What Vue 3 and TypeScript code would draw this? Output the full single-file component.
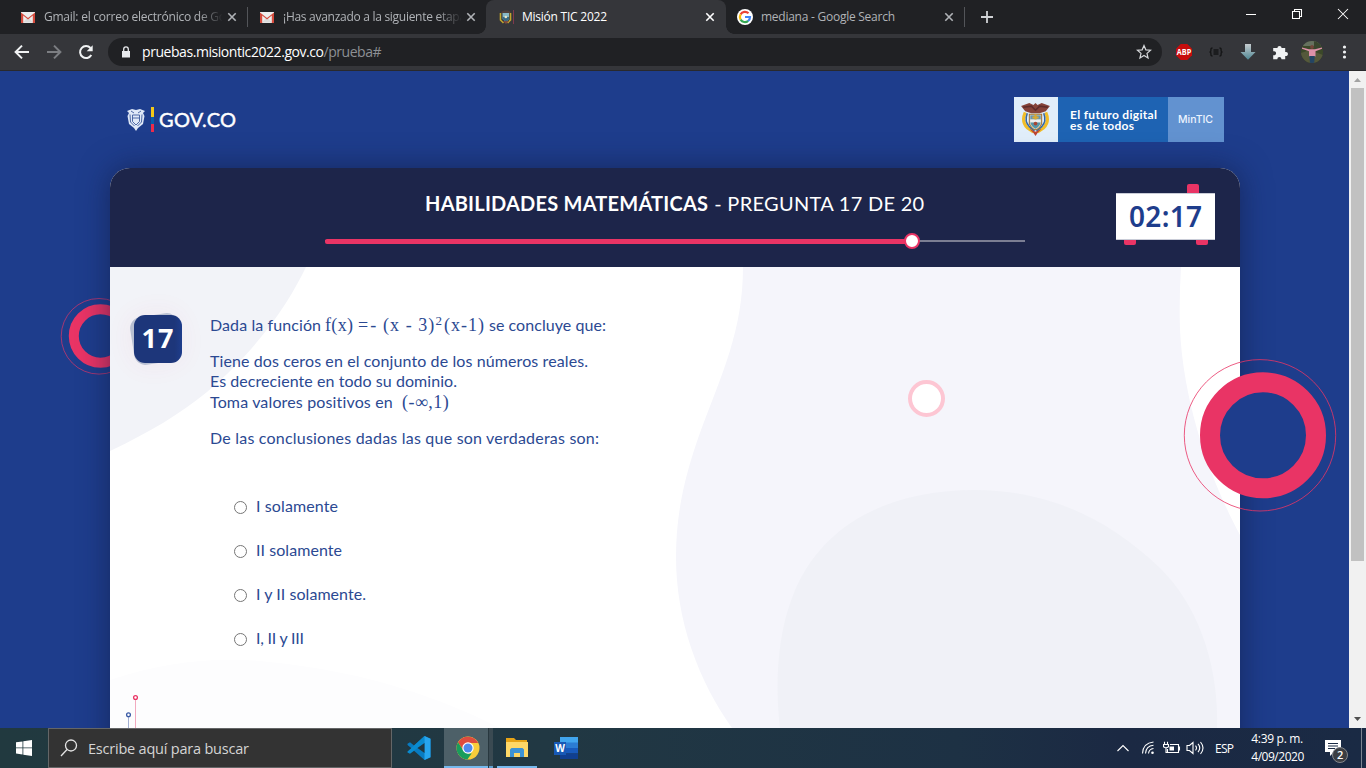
<script setup lang="ts">
import type { Directive } from 'vue'

interface Tab {
  title: string
  icon: 'gmail' | 'crest' | 'google'
  kind: string
  active?: boolean
  width: number
}

const tabs: Tab[] = [
  { title: 'Gmail: el correo electrónico de Go', icon: 'gmail', kind: 'first', width: 182 },
  { title: '¡Has avanzado a la siguiente etapa', icon: 'gmail', kind: 'second', width: 183 },
  { title: 'Misión TIC 2022', icon: 'crest', kind: 'current', active: true, width: 85 },
  { title: 'mediana - Google Search', icon: 'google', kind: 'last', width: 134 },
]

const options = [
  { label: 'I solamente', width: 82 },
  { label: 'II solamente', width: 86 },
  { label: 'I y II solamente.', width: 110 },
  { label: 'I, II y III', width: 48 },
]

const question = 17
const total = 20

// Tracks a line of text so that it takes up the given width in pixels.
const vFit: Directive<HTMLElement, number> = {
  mounted(el, { value }) {
    if (!value) return
    const natural = el.getBoundingClientRect().width
    const count = (el.textContent ?? '').trim().length
    el.style.letterSpacing = `${(value - natural) / Math.max(1, count - 1)}px`
  },
}
</script>

<template>
  <div class="screen">
    <header class="tabstrip">
      <div v-for="tab in tabs" :key="tab.kind" class="tab" :class="[tab.kind, { active: tab.active }]">
        <svg v-if="tab.icon === 'gmail'" class="fav" viewBox="0 0 16 16">
          <path d="M1 3h14v11H1z" fill="#eee" />
          <path d="M3 13.5 8 8l5 5.5z" fill="#dcdcdc" />
          <path d="M1 14V3.400L8 9l7-5.600V14h-2.200V6.500L8 10.500 3.200 6.500V14z" fill="#d54b3d" />
        </svg>
        <svg v-else-if="tab.icon === 'crest'" class="fav" viewBox="0 0 16 16">
          <path d="M3 3 6 1.500h4L13 3l-2 2H5z" fill="#51403b" />
          <path d="M2.500 4v7l3 3M12.500 4v7l-3 3" fill="none" stroke="#c2a62d" stroke-width="1.600" />
          <path d="M4.500 4h6.500v6l-3 3-3.500-3z" fill="#87b8c6" />
          <path d="M4.500 8h6.500v2l-3 3-3.500-3z" fill="#396a83" />
          <circle cx="7.800" cy="8" r="1.300" fill="#eee6c4" />
          <path d="M5 12h6l-3 3z" fill="#7e4a3e" />
          <path d="M15.500 1v14" stroke="#80394d" />
        </svg>
        <svg v-else class="fav" viewBox="0 0 16 16">
          <circle cx="8" cy="8" r="8" fill="#fff" />
          <path d="M3.600 5.400A5 5 0 0 1 11.500 4.300" fill="none" stroke="#ea4335" stroke-width="2.200" />
          <path d="M3.600 5.400A5.200 5.200 0 0 0 3.600 10.600" fill="none" stroke="#fbbc05" stroke-width="2.200" />
          <path d="M3.600 10.600A5 5 0 0 0 11.200 11.800" fill="none" stroke="#34a853" stroke-width="2.200" />
          <path d="M8 8h5c0 1.700-.7 3-1.900 4" fill="none" stroke="#4285f4" stroke-width="2.200" />
        </svg>
        <div class="tab-title"><span v-fit="tab.width">{{ tab.title }}</span></div>
        <svg class="tab-close" viewBox="0 0 10 10"><path d="m1.300 1.300 7.400 7.400m0-7.400L1.300 8.700" /></svg>
      </div>
      <svg class="plus" viewBox="0 0 12 12"><path d="M6 0v12M0 6h12" /></svg>
      <div class="window-buttons">
        <svg viewBox="0 0 12 12"><path d="M1 6.500h10" /></svg>
        <svg viewBox="0 0 12 12"><path d="M1.500 3.500h7v7h-7zM3.500 3.500v-2h7v7h-2" /></svg>
        <svg viewBox="0 0 12 12"><path d="m1 1 10 10m0-10L1 11" /></svg>
      </div>
    </header>

    <nav class="toolbar">
      <svg class="nav-icon" viewBox="0 0 16 16"><path d="M15 8H2M8 1.600 1.600 8 8 14.400" /></svg>
      <svg class="nav-icon dim" viewBox="0 0 16 16"><path d="M1 8h13M8 1.600 14.400 8 8 14.400" /></svg>
      <svg class="nav-icon" viewBox="0 0 16 16">
        <path d="M13.300 11A6 6 0 1 1 12.500 4" /><path class="solid" d="M14.700 1.200v6H8.700z" />
      </svg>
      <div class="omnibox">
        <svg class="lock" viewBox="0 0 10 12">
          <path d="M1 5h8v6.500H1z" fill="#e8eaed" /><path d="M2.700 5V3.200a2.300 2.300 0 0 1 4.600 0V5" fill="none" stroke="#e8eaed" stroke-width="1.300" />
        </svg>
        <span class="url" v-fit="182">pruebas.misiontic2022.gov.co</span><span class="url path" v-fit="58">/prueba#</span>
        <svg class="star" viewBox="0 0 16 16"><path d="m8 1.500 1.850 4.350 4.700.4-3.550 3.100 1.050 4.600L8 11.500l-4.050 2.450L5 9.350l-3.550-3.100 4.700-.4z" /></svg>
      </div>
      <div class="extensions">
        <svg viewBox="0 0 16 16">
          <path d="M4.700 0h6.600L16 4.700v6.600L11.300 16H4.700L0 11.300V4.700z" fill="#c70d0d" />
          <text x=".8" y="11" textLength="14.400" lengthAdjust="spacingAndGlyphs" class="abp">ABP</text>
        </svg>
        <svg viewBox="0 0 16 16" fill="none" stroke="#151617" stroke-width="1.400">
          <path d="M4.500 4Q2.700 4 2.900 6 3 8 1.500 8 3 8 2.900 10 2.700 12 4.500 12M11.500 4Q13.300 4 13.100 6 13 8 14.500 8 13 8 13.100 10 13.300 12 11.500 12M5.500 6h5M5.500 8h5M5.500 10h5" />
        </svg>
        <svg viewBox="0 0 16 16"><defs><linearGradient id="dl" y2="1" x2="0"><stop stop-color="#c5cbce" /><stop offset="1" stop-color="#4e8794" /></linearGradient></defs><path d="M5 0h6v8h4.500L8 15.800.5 8H5z" fill="url(#dl)" /></svg>
        <svg viewBox="0 0 16 16"><path d="M1.200 4h4.200a2.100 2.100 0 1 1 4.200 0h3.600v4a2.100 2.100 0 1 1 0 4v3.200H9.500a2.100 2.100 0 1 0-4.200 0H1.200v-4a2.100 2.100 0 1 0 0-3.900z" fill="#f1f3f4" /></svg>
        <svg class="avatar" viewBox="0 0 22 22">
          <defs><clipPath id="face"><circle cx="11" cy="11" r="11" /></clipPath></defs>
          <g clip-path="url(#face)">
            <path d="M0 0h22v22H0z" fill="#3b4829" /><path d="M0 0h22v5H0z" fill="#66715f" />
            <path d="M0 12 9 9l13 5v8H0z" fill="#55583a" /><path d="M13 0h9v8h-9z" fill="#39462e" />
            <path d="M1 6.500 8 8.200h6l7-1.700v1.200l-6.500 2.600v5.200H8v-5.200L1 7.700z" fill="#dd91a9" /><path d="M8.300 15h5.500l-.6 7H9z" fill="#244564" />
            <circle cx="11" cy="6" r="1.900" fill="#73463a" />
          </g>
        </svg>
        <svg viewBox="0 0 16 16" fill="#f1f3f4"><circle cx="8.500" cy="3" r="1.600" /><circle cx="8.500" cy="8" r="1.600" /><circle cx="8.500" cy="13" r="1.600" /></svg>
      </div>
    </nav>

    <div class="viewport">
      <main class="page">
        <svg class="ring-left" viewBox="0 0 80 80">
          <circle cx="39" cy="39.300" r="37.800" stroke-width="1" opacity=".65" /><circle cx="40.500" cy="39" r="26.700" stroke-width="10" />
        </svg>
        <div class="brands">
          <div class="gov">
            <svg class="gov-crest" viewBox="0 0 20 23">
              <path d="M1 3 6 1l4 1 4-1 5 2-2 2 1.500 3-1.500 8-5 4-2 3-2-3-5-4L1.500 8 3 5z" fill="#dfe8f7" />
              <path d="M6.500 7h7v6.500L10 17l-3.500-3.500zM6.500 10h7M4 6.500l.5 7.500 4 4M16 6.500l-.5 7.500-4 4M5 3l3 2M15 3l-3 2" fill="none" stroke="#3d5a9c" stroke-width=".9" />
            </svg>
            <i class="flag"></i>
            <span class="gov-text" v-fit="77">GOV.CO</span>
          </div>
          <div class="ministry">
            <div class="coat">
              <svg viewBox="0 0 30 34">
                <path d="M1 4 9 1l4 2 2-2 2 2 4-2 8 3-4 5-6 2H11L5 9z" fill="#86433a" />
                <path d="M3 5 11 4l4 4 4-4 8 1" fill="none" stroke="#5e2c2b" stroke-width="1.500" />
                <path d="M5 10q-4 9 2 15l6 4M25 10q4 9-2 15l-6 4" fill="none" stroke="#f1bd28" stroke-width="3" />
                <path d="M7 11q-3 8 2 13l5 4M23 11q3 8-2 13l-5 4" fill="none" stroke="#3467a6" stroke-width="1.500" />
                <path d="M9 12h12v9q-2 5-6 6-4-1-6-6z" fill="#d5d6bf" stroke="#a57431" />
                <path d="M10 13h10v4H10z" fill="#6794b2" /><path d="M10 17h10v3H10z" fill="#eee" /><path d="M10 20h10q-1 4-5 6-4-2-5-6z" fill="#5596a9" />
                <path d="M15 12v5M12 15h6" stroke="#dca92e" stroke-width="2" /><circle cx="15" cy="21" r="1.800" fill="#a84533" />
                <path d="m9 26 6 3 6-3-4 4-2 3-2-3z" fill="#bd4631" />
              </svg>
            </div>
            <div class="slogan"><span v-fit="87">El futuro digital</span><span v-fit="64">es de todos</span></div>
            <div class="mintic"><span v-fit="35">MinTIC</span></div>
          </div>
        </div>

        <section class="card">
          <div class="card-head">
            <h1><b v-fit="283">HABILIDADES MATEMÁTICAS</b><span class="head-rest" v-fit="210">- PREGUNTA {{ question }} DE {{ total }}</span></h1>
            <div class="track"><div class="done"></div><div class="knob"></div></div>
            <div class="timer"><i class="peg top"></i><i class="peg left"></i><i class="peg right"></i><div class="time"><span v-fit="73">02:17</span></div></div>
          </div>
          <div class="card-body">
            <svg class="backdrop" viewBox="110 267 1130 461">
              <path d="M110 267H306C290 300 262 345 207 392C180 414 150 432 110 451Z" fill="#f2f3f8" />
              <path d="M743 267C743 330 722 374 701 430C684 477 676 515 676 557C676 620 698 680 732 728H1240V535C1214 487 1184 410 1180 330Q1179 300 1181 267Z" fill="#f5f5fb" />
              <path d="M780 728C775 686 777 637 792 598C819 525 888 490 975 490C1050 490 1110 520 1160 568C1198 605 1219 665 1217 728Z" fill="#f0f1f7" />
              <path d="M110 680Q185 655 260 661Q390 672 500 728H110Z" fill="#fdfdfe" />
              <circle cx="926.500" cy="398.500" r="16.500" fill="#fff" stroke="#fdc6d3" stroke-width="4" />
              <g fill="#fff" stroke="#e93465"><path d="M135.500 700v28" stroke="#f2aabf" /><circle cx="135.500" cy="697.500" r="1.900" stroke-width="1.300" /></g>
              <g fill="#fff" stroke="#3959a5"><path d="M128.500 717v11" stroke="#a2afd2" /><circle cx="128.500" cy="714.800" r="1.900" stroke-width="1.300" /></g>
            </svg>
            <div class="badge"><span v-fit="32">{{ question }}</span></div>
            <div class="content">
              <p class="formula-line">
                <span v-fit="111">Dada la función</span><span class="math m1" v-fit="43">f(x) =</span><span class="math m2" v-fit="64">- (x - 3)</span><sup>2</sup><span class="math m3" v-fit="40">(x-1)</span><span class="end" v-fit="117">se concluye que:</span>
              </p>
              <p>
                <span class="line" v-fit="378">Tiene dos ceros en el conjunto de los números reales.</span>
                <span class="line" v-fit="247">Es decreciente en todo su dominio.</span>
                <span class="line last-line"><span v-fit="183">Toma valores positivos en</span><span class="math interval" v-fit="47">(-∞,1)</span></span>
              </p>
              <p><span class="line" v-fit="389">De las conclusiones dadas las que son verdaderas son:</span></p>
              <div class="options">
                <label v-for="option in options" :key="option.label"><input type="radio" name="answer"><span v-fit="option.width">{{ option.label }}</span></label>
              </div>
            </div>
          </div>
        </section>

        <svg class="ring-right" viewBox="0 0 156 156">
          <circle cx="78" cy="78.300" r="75.700" fill="none" stroke="#e93465" opacity=".8" /><circle cx="81" cy="78.300" r="53" fill="#1e3d8c" stroke="#e93465" stroke-width="20" />
        </svg>
      </main>
      <aside class="scrollbar">
        <svg viewBox="0 0 17 17"><path d="m5 11 3.500-4 3.500 4z" fill="#a3a3a3" /></svg>
        <div class="thumb"></div>
        <svg class="down" viewBox="0 0 17 17"><path d="m5 6 3.500 4L12 6z" fill="#505050" /></svg>
      </aside>
    </div>

    <footer class="taskbar">
      <div class="start"><svg viewBox="0 0 16 16"><path d="m0 2.300 6.500-.9v6.100H0zM7.300 1.300 16 0v7.500H7.300zM0 8.300h6.500v6.200L0 13.600zM7.300 8.300H16V16l-8.700-1.300z" fill="#fff" /></svg></div>
      <div class="search">
        <svg viewBox="0 0 18 18"><circle cx="11" cy="6.500" r="5.500" /><path d="m7 10.500-6 6.500" /></svg>
        <span v-fit="161">Escribe aquí para buscar</span>
      </div>
      <div class="app vscode">
        <svg viewBox="0 0 24 24"><path d="M17.500 0 7 9.500 3 6.300.5 7.700v1.200L17.500 24l6-2.700V2.700z" fill="#087bc1" /><path d="M.5 15.500 17.500 0v7L3 17.700.5 16.500z" fill="#0a8bd0" /><path d="m17.500 0 6 2.700v18.600l-6 2.700z" fill="#27a5ee" /><path d="m17.500 7-7 5 7 5z" fill="#213740" /><path d="M.5 9.500 4 12 .5 14.500z" fill="#213740" /></svg>
      </div>
      <div class="app chrome">
        <svg viewBox="0 0 24 24"><circle cx="12" cy="12" r="11.500" fill="#f9cc3a" /><path d="M2 6.300A11.500 11.500 0 0 1 22.200 7H12l-4.300 7.500z" fill="#dd4b3e" /><path d="M2 6.300 7.700 15 12 17.500h3.700L11.300 23.500A11.500 11.500 0 0 1 2 6.300z" fill="#199d5c" /><circle cx="12" cy="12" r="5.700" fill="#fff" /><circle cx="12" cy="12" r="4.500" fill="#4d89ee" /></svg>
      </div>
      <div class="app explorer">
        <svg viewBox="0 0 24 24"><path d="M1 3h8l2 2h11v16H1z" fill="#e7a416" /><path d="M1 7h22v15H1z" fill="#ffd867" /><path d="M5 14.500 6.500 13h11l1.500 1.500V22h-4v-4H9v4H5z" fill="#3d93d5" /></svg>
      </div>
      <div class="app word">
        <svg viewBox="0 0 24 24"><path d="M6 1h18v6H6z" fill="#41a5ee" /><path d="M6 6.500h18V12H6z" fill="#2b7cd3" /><path d="M6 12h18v5.500H6z" fill="#185abd" /><path d="M6 17.500h18V23H6z" fill="#103f91" /><path d="M0 6h12v13H0z" fill="#1859b6" /><text x="6" y="16" text-anchor="middle" class="w-letter">W</text></svg>
      </div>
      <div class="tray">
        <svg class="chevron" viewBox="0 0 14 16"><path d="m1.500 11 5.500-5.500 5.500 5.500" /></svg>
        <svg class="wifi" viewBox="0 0 14 16"><path d="M1.500 13.500Q2 3 12.500 2M4.500 13.500Q5 6 12.500 5.300M7.500 13.500Q8 9 12.500 8.500" /><circle cx="11.500" cy="12.700" r="1.300" fill="#fff" stroke="none" /></svg>
        <svg class="battery" viewBox="0 0 18 16"><path d="M7 4.500h8.500v8H4.500v-3.500M15.500 7h1v3h-1M.5 4.500h5v2.200q-2.500 2-5 0zM1.500 1.800v2.700M4.500 1.800v2.700M3 8v4.500h1.500" /><path d="M6.500 6.500h4.500v4H6.500z" fill="#fff" stroke="none" /></svg>
        <svg class="speaker" viewBox="0 0 18 16"><path d="M1 5.500h2.500L7 2.500v11l-3.500-3H1zM9.500 5.700q2 2.300 0 4.600M12 3.900q3.500 4.100 0 8.200M14.500 2q5 6 0 12" /></svg>
        <span class="esp" v-fit="19">ESP</span>
        <div class="clock"><span v-fit="52">4:39 p. m.</span><span v-fit="53">4/09/2020</span></div>
        <div class="notice">
          <svg viewBox="0 0 16 16"><path d="M0 0h16v12H9l-4 4v-4H0z" fill="#fff" /><path d="M3 3.500h10M3 6h10M3 8.500h7" stroke="#1b2b45" /></svg>
          <b>2</b>
        </div>
      </div>
    </footer>
  </div>
</template>

<style>
html, body { margin: 0; overflow: hidden; }
</style>

<style scoped>
* { box-sizing: border-box; }
svg { display: block; flex: none; }
.screen { width: 1366px; height: 768px; display: flex; flex-direction: column; overflow: hidden; font-family: "Open Sans", "Noto Sans", sans-serif; }
span, b { white-space: pre; }

.tabstrip { height: 34px; background: #202124; display: flex; align-items: center; color: #b0b3b7; font-size: 12px; }
.tab { position: relative; height: 34px; display: flex; align-items: center; flex: none; }
.tab.first { width: 248px; padding: 0 11px 0 20px; }
.tab.second { width: 238px; padding: 0 10px 0 11px; }
.tab.current { width: 240px; padding: 0 11px 0 12px; }
.tab.last { width: 239px; padding: 0 11px 0 11px; }
.tab.first::after, .tab.last::after { content: ""; position: absolute; right: 0; top: 7px; width: 1px; height: 20px; background: #535559; }
.tab.active { color: #fff; background: #35363a; border-radius: 8px 8px 0 0; }
.tab.active::before, .tab.active::after { content: ""; position: absolute; bottom: 0; width: 8px; height: 8px; }
.tab.active::before { left: -8px; background: radial-gradient(circle at 0 0, transparent 7.5px, #35363a 8px); }
.tab.active::after { right: -8px; background: radial-gradient(circle at 100% 0, transparent 7.5px, #35363a 8px); }
.fav { width: 16px; height: 16px; margin-right: 8px; }
.tab-title { flex: 1; overflow: hidden; line-height: 20px; }
.tab-title span { display: inline-block; }
.first .tab-title, .second .tab-title { mask-image: linear-gradient(90deg, #000 154px, transparent 179px); margin-right: 5px; }
.tab-close { width: 10px; height: 10px; stroke: currentColor; stroke-width: 1.6; fill: none; }
.plus { width: 12px; height: 12px; margin-left: 16px; stroke: #d0d2d5; stroke-width: 1.8; }
.window-buttons { margin-left: auto; display: flex; gap: 34px; padding: 0 17px 6px 0; }
.window-buttons svg { width: 12px; height: 12px; stroke: #fff; fill: none; stroke-width: 1.05; }

.toolbar { height: 37px; background: #35363a; border-bottom: 1px solid #29292c; display: flex; align-items: center; padding-left: 14px; }
.nav-icon { width: 16px; height: 16px; margin-right: 16px; fill: none; stroke: #f1f3f4; stroke-width: 2; }
.nav-icon.dim { stroke: #7c7e82; }
.nav-icon .solid { fill: #f1f3f4; stroke: none; }
.omnibox { width: 1054px; margin-left: -2px; height: 28px; border-radius: 14px; background: #202124; display: flex; align-items: center; padding: 0 10px 0 13px; color: #fff; font-size: 14px; }
.lock { width: 10px; height: 12px; margin-right: 11px; }
.url { display: inline-block; line-height: 24px; padding-bottom: 1px; }
.url.path { color: #8d9094; }
.star { width: 16px; height: 16px; margin-left: auto; fill: none; stroke: #d5d7da; stroke-width: 1.2; }
.extensions { display: flex; align-items: center; gap: 16px; margin-left: 14px; }
.extensions svg { width: 16px; height: 16px; }
.extensions .avatar { width: 22px; height: 22px; margin: 0 -3px; }
.abp { font: bold 8.5px "Open Sans", sans-serif; fill: #fff; }

.viewport { height: 657px; display: flex; }
.page { position: relative; width: 1349px; overflow: hidden; background: #1e3d8c; }
.brands { height: 97px; display: flex; justify-content: space-between; padding: 26px 125px 0 126px; }
.gov { display: flex; align-items: center; height: 45px; }
.gov-crest { width: 20px; height: 23px; }
.flag { width: 3px; height: 25px; margin: 0 5px; background: linear-gradient(#f3c917 0 40%, #075eac 40% 70%, #ed2b4a 70%); }
.gov-text { display: inline-block; margin-top: -2px; color: #fff; font: 400 20px/24px Lato, sans-serif; -webkit-text-stroke: .45px #fff; }
.ministry { display: flex; height: 45px; }
.coat { width: 44px; background: #e1eefa; padding: 5px 6px; }
.coat svg { width: 31px; height: 35px; }
.slogan { width: 110px; background: #1e63b3; color: #fff; font: bold 12px/11px Lato, sans-serif; padding: 12px 0 0 12px; display: flex; flex-direction: column; align-items: flex-start; }
.mintic { width: 56px; background: #6292d0; color: #edf4ff; display: flex; align-items: center; padding-left: 10px; font: 500 10.5px/12px Inter, sans-serif; }

.card { position: relative; width: 1130px; height: 620px; margin-left: 110px; border-radius: 20px 20px 0 0; background: #fff; box-shadow: 0 0 30px rgba(16, 25, 62, .6); }
.card-head { height: 99px; background: #1d254a; border-radius: 20px 20px 0 0; position: relative; display: flex; flex-direction: column; align-items: flex-start; }
h1 { margin: 22px 0 0 315px; height: 26px; font: 400 20px/26px Lato, sans-serif; color: #fff; display: flex; gap: 6px; }
h1 b { font-weight: 700; }
.track { margin: 17px 0 0 215px; width: 700px; height: 16px; display: flex; align-items: center; background: linear-gradient(#7b7e93, #7b7e93) 0 7px / 100% 2px no-repeat; }
.done { width: 580px; height: 5px; background: #e93465; border-radius: 2px 0 0 2px; }
.knob { width: 16px; height: 16px; margin-left: -1px; border: 2px solid #e93465; border-radius: 50%; background: #fff; }
.timer { position: absolute; left: 1006px; top: 25px; width: 99px; height: 47px; }
.time { position: relative; height: 47px; background: #fff; border: solid #c9ccd7; border-width: 1px 0; color: #1e3d8c; display: flex; align-items: center; padding: 0 0 2px 13px; font: 600 28px/42px "Noto Sans", sans-serif; }
.peg { position: absolute; width: 12px; height: 14px; background: #e93465; border-radius: 2px; }
.peg.top { left: 71px; top: -9px; }
.peg.left { left: 8px; bottom: -5px; }
.peg.right { left: 80px; bottom: -5px; }
.card-body { position: relative; height: 461px; overflow: hidden; display: flex; align-items: flex-start; padding: 48px 0 0 24px; background: #fff; color: #2b4992; font: 16px/20px Lato, sans-serif; }
.backdrop { position: absolute; inset: 0; width: 1130px; height: 461px; }
.badge { position: relative; width: 48px; height: 48px; border-radius: 11px; display: flex; align-items: center; justify-content: center; color: #fff; font: 700 27px/46px "Open Sans", sans-serif; padding-bottom: 2px; z-index: 1; }
.badge::before { content: ""; position: absolute; z-index: -1; inset: 0; background: #b9c0d2; border-radius: 11px; transform: translate(-2px, 0) rotate(-9deg); box-shadow: 0 0 28px rgba(233, 52, 101, .07); }
.badge::after { content: ""; position: absolute; z-index: -1; inset: 0; border-radius: 11px; background: linear-gradient(90deg, #1d367a 85%, #1e3d8c); }
.content { position: relative; margin-left: 28px; }
.content p { margin: 0 0 16px; }
.content span { display: inline-block; }
.content .line { display: block; width: max-content; height: 20px; }
.content .last-line { display: flex; height: 21px; align-items: center; padding-top: 1px; }
.content .formula-line { height: 20px; display: flex; align-items: center; margin-bottom: 16px; }
.math { font: 18px/20px "Liberation Serif", serif; }
.m1 { margin-left: 4px; }
.m2 { margin-left: 2px; }
sup { font: 13px/12px "Liberation Serif", serif; margin: -9px 2px 0 0; }
.m3 { margin-right: 4px; }
.interval { margin-left: 9px; }
.options { padding: 40px 0 0 24px; display: flex; flex-direction: column; gap: 24px; margin-top: -8px; }
.options label { height: 20px; display: flex; align-items: center; }
.options input { width: 13px; height: 13px; margin: 2px 9px 0 0; }
.ring-left { position: absolute; left: 60px; top: 226px; width: 80px; height: 80px; fill: none; stroke: #e93465; }
.ring-right { position: absolute; left: 1182px; top: 286px; width: 156px; height: 156px; }
.scrollbar { width: 17px; background: #f1f1f1; display: flex; flex-direction: column; }
.scrollbar svg { width: 17px; height: 17px; }
.thumb { width: 13px; height: 473px; margin-left: 2px; background: #c1c1c1; }
.scrollbar .down { margin-top: auto; }

.taskbar { height: 40px; display: flex; background: linear-gradient(90deg, #21393f, #213843 40%, #1d3144 70%, #1b2943 82%, #1a2a44); color: #fff; }
.start { width: 48px; padding: 12px 16px; }
.start svg { width: 16px; height: 16px; }
.search { width: 344px; height: 40px; background: #333; border: 1px solid #646667; display: flex; align-items: center; padding-left: 11px; color: #d5d5d5; font-size: 14.5px; }
.search svg { width: 18px; height: 18px; margin-right: 10px; fill: none; stroke: #e4e4e4; stroke-width: 1.3; }
.app { height: 40px; display: flex; align-items: center; justify-content: center; width: 40px; }
.app svg { width: 24px; height: 24px; }
.vscode { margin-left: 7px; }
.chrome { position: relative; width: 44px; margin-left: 5px; background: #4d6068; border-bottom: 2px solid #76b9ed; padding: 2px 0 0 3px; }
.chrome::after { content: ""; position: absolute; left: 44px; top: 0; width: 4px; height: 40px; background: linear-gradient(#3a4a52 38px, #5f9fcf 38px); border-left: 1px solid #28383f; }
.explorer { margin-left: 9px; border-bottom: 2px solid #76b9ed; }
.word { margin-left: 9px; }
.w-letter { font: bold 10px "Open Sans", sans-serif; fill: #fff; }
.tray { margin-left: auto; display: flex; align-items: center; width: 250px; font-size: 12px; position: relative; }
.tray > svg { height: 16px; stroke: #fff; fill: none; stroke-width: 1.1; }
.chevron { width: 14px; }
.wifi { width: 14px; margin-left: 11px; }
.battery { width: 18px; margin-left: 8px; }
.speaker { width: 18px; margin-left: 5px; }
.esp { margin-left: 11px; font-size: 12px; }
.clock { margin-left: 18px; width: 54px; line-height: 18px; font-size: 12px; display: flex; flex-direction: column; align-items: flex-start; }
.notice { position: relative; margin-left: 20px; }
.notice svg { width: 16px; height: 16px; }
.notice b { position: absolute; left: 7px; top: 7px; width: 16px; height: 16px; border-radius: 50%; background: #3b3e43; border: 1px solid #85888d; font: 600 11px/14px "Open Sans", sans-serif; text-align: center; }
.tray::after { content: ""; position: absolute; right: 4px; top: 0; width: 1px; height: 40px; background: #7c8592; }
</style>
